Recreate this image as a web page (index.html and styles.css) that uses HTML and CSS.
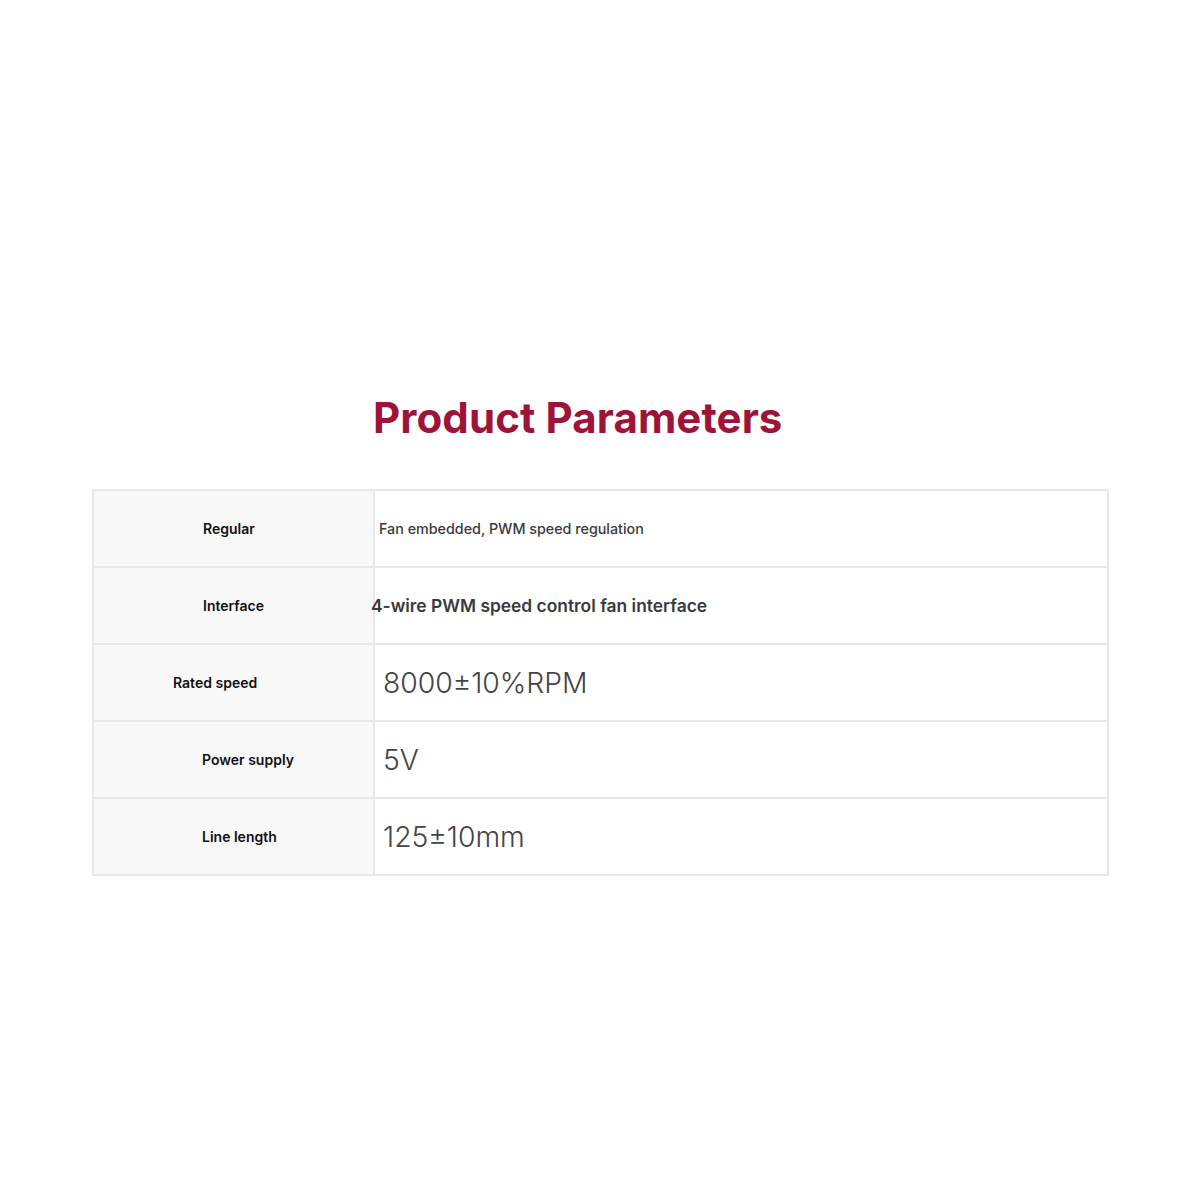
FILE: index.html
```html
<!DOCTYPE html>
<html>
<head>
<meta charset="utf-8">
<link rel="stylesheet" href="styles.css">
</head>
<body>
<main class="page">
  <h1 class="title">Product Parameters</h1>
  <div class="table">
    <div class="row">
      <div class="label label-regular">Regular</div>
      <div class="value value-small">Fan embedded, PWM speed regulation</div>
    </div>
    <div class="row">
      <div class="label label-interface">Interface</div>
      <div class="value value-medium">4-wire PWM speed control fan interface</div>
    </div>
    <div class="row">
      <div class="label label-speed">Rated speed</div>
      <div class="value value-large">8000±10%RPM</div>
    </div>
    <div class="row">
      <div class="label label-power">Power supply</div>
      <div class="value value-large">5V</div>
    </div>
    <div class="row row-last">
      <div class="label label-line">Line length</div>
      <div class="value value-large">125±10mm</div>
    </div>
  </div>
</main>
</body>
</html>
```
FILE: styles.css
```css
html, body {
  margin: 0;
  padding: 0;
  background: #ffffff;
}
body {
  font-family: Inter, "Noto Sans", sans-serif;
  width: 1200px;
  height: 1200px;
}
.page {
  padding-top: 393px;
  padding-left: 92px;
  display: flex;
  flex-direction: column;
}
.title {
  margin: 0 0 0 281px;
  font-size: 42px;
  line-height: 50px;
  font-weight: 700;
  color: #9e1438;
  letter-spacing: 0.1px;
}
.table {
  margin-top: 46px;
  width: 1013px;
  border: 2px solid #e8e8e8;
  display: flex;
  flex-direction: column;
}
.row {
  display: grid;
  grid-template-columns: 281px 1fr;
  height: 75px;
  border-bottom: 2px solid #e8e8e8;
}
.row-last {
  border-bottom: none;
}
.label {
  background: #f8f8f8;
  border-right: 2px solid #e8e8e8;
  display: flex;
  align-items: center;
  font-size: 14px;
  font-weight: 600;
  color: #111;
}
.label-regular { padding-left: 109px; }
.label-interface { padding-left: 109px; }
.label-speed { padding-left: 79px; }
.label-power { padding-left: 108px; }
.label-line { padding-left: 108px; }
.value {
  display: flex;
  align-items: center;
  color: #3a3a3a;
}
.value-small {
  padding-left: 4px;
  font-size: 14.3px;
  font-weight: 500;
}
.value-medium {
  padding-left: 0;
  margin-left: -4px;
  font-size: 17.4px;
  font-weight: 600;
}
.value-large {
  padding-left: 8px;
  font-size: 28.3px;
  font-weight: 300;
  color: #444;
}
```
